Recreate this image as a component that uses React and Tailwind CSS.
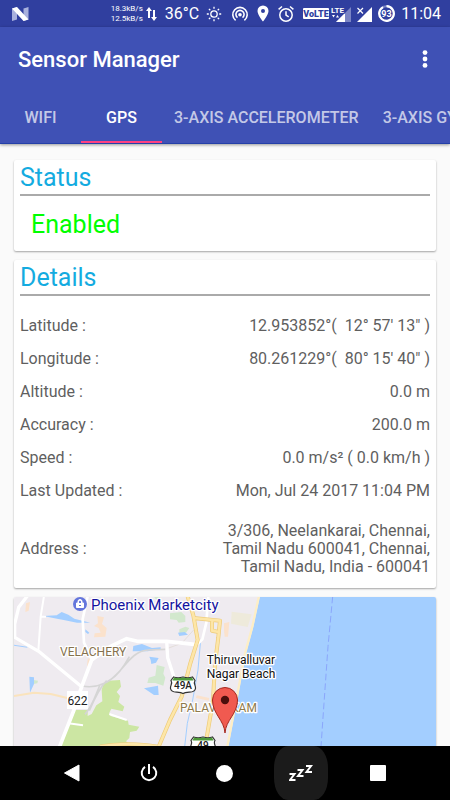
import React from "react";

const TABS = ["WIFI", "GPS", "3-AXIS ACCELEROMETER", "3-AXIS GYROSCOPE"];

const DETAILS = [
  { label: "Latitude :", value: "12.953852°(  12° 57' 13\" )" },
  { label: "Longitude :", value: "80.261229°(  80° 15' 40\" )" },
  { label: "Altitude :", value: "0.0 m" },
  { label: "Accuracy :", value: "200.0 m" },
  { label: "Speed :", value: "0.0 m/s² ( 0.0 km/h )" },
  { label: "Last Updated :", value: "Mon, Jul 24 2017 11:04 PM" },
];

const ADDRESS = [
  "3/306, Neelankarai, Chennai,",
  "Tamil Nadu 600041, Chennai,",
  "Tamil Nadu, India - 600041",
];

/**
 * Android status bar: network speed, temperature, indicators and clock
 */
const StatusBar = () => (
  <div className="flex h-[27px] shrink-0 items-center justify-between bg-[#303f9f] pl-3 pr-[9px] text-white">
    <svg width="17" height="14" viewBox="0 0 17 14" aria-hidden="true">
      <path d="M0 1.5L5 0v12.5L0 14z" fill="#a9b1dd" />
      <path d="M11.5 1.5L16.5 0v12.5L11.5 14z" fill="#a9b1dd" />
      <path d="M0 1.5L5 0l11.500 12.500-5 1.500z" fill="#fff" />
    </svg>
    <div className="flex items-center gap-[6px]">
      <div className="flex items-center gap-[3px]">
        <div className="text-right text-[8px] leading-[10px]">
          <div>18.3kB/s</div>
          <div>12.5kB/s</div>
        </div>
        <svg width="13" height="14" viewBox="0 0 13 14" fill="#fff" aria-hidden="true">
          <path d="M3 0l3 4H4v7H2V4H0z" />
          <path d="M8 14l-3-4h2V3h2v7h2z" />
        </svg>
      </div>
      <span className="text-[16px] leading-5">36°C</span>
      <svg width="18" height="16" viewBox="0 0 18 16" fill="none" stroke="#fff" strokeWidth="1.3" aria-hidden="true">
        <circle cx="9" cy="8" r="3.2" />
        <path d="M9 .8v2M9 13.2v2M1.8 8h2M14.2 8h2M3.9 2.9l1.4 1.4M12.7 11.7l1.4 1.4M3.9 13.1l1.4-1.4M12.7 4.3l1.4-1.4" />
      </svg>
      <svg width="22" height="16" viewBox="0 0 22 16" fill="none" stroke="#fff" strokeWidth="1.6" aria-hidden="true">
        <path d="M6.6 14.3a7.2 7.2 0 1 1 8.8 0" />
        <path d="M8.5 11.7a4.1 4.1 0 1 1 5 0" />
        <circle cx="11" cy="8.8" r="1.8" fill="#fff" stroke="none" />
      </svg>
      <svg width="12" height="17" viewBox="0 0 12 17" aria-hidden="true">
        <path
          fill="#fff"
          fillRule="evenodd"
          d="M6 .5A5.5 5.5 0 0 0 .5 6C.5 10 6 16.5 6 16.5S11.5 10 11.5 6A5.5 5.5 0 0 0 6 .5zM6 4a2 2 0 1 1 0 4 2 2 0 0 1 0-4z"
        />
      </svg>
      <svg width="22" height="18" viewBox="0 0 22 18" fill="none" stroke="#fff" strokeWidth="1.5" aria-hidden="true">
        <circle cx="11" cy="10" r="6.2" />
        <path d="M11 6.2v4l2.7 1.7M3.6 4.3L7 1.5M18.4 4.3L15 1.5" />
      </svg>
      <div className="flex items-center gap-[2px]">
        <svg width="26" height="11" viewBox="0 0 26 11" aria-hidden="true">
          <rect width="26" height="11" rx="1" fill="#fff" />
          <text x="13" y="9" textAnchor="middle" fontSize="9" fontWeight="900" fill="#303f9f">
            VoLTE
          </text>
        </svg>
        <svg width="20" height="18" viewBox="0 0 20 18" aria-hidden="true">
          <path d="M20 2v15H5z" fill="#7a84c4" />
          <path d="M14 8v9H5z" fill="#fff" />
          <text x="0" y="8" fontSize="8" fontWeight="700" fill="#fff" stroke="#303f9f" strokeWidth="1.5" paintOrder="stroke">
            LTE
          </text>
          <path d="M1 10l1.500 2.500L4 10zM5 12.500L6.500 10 8 12.500z" fill="#fff" />
        </svg>
      </div>
      <svg width="15" height="18" viewBox="0 0 15 18" aria-hidden="true">
        <path d="M15 2v15H0z" fill="#fff" />
        <path d="M0 3h7v6H0z" fill="#303f9f" />
        <path d="M.5 3L6 8.5M6 3L.5 8.5" stroke="#fff" strokeWidth="1.2" />
      </svg>
      <svg width="17" height="17" viewBox="0 0 17 17" aria-hidden="true">
        <circle cx="8.5" cy="8.5" r="7.3" fill="none" stroke="#7a84c4" strokeWidth="2" />
        <path d="M8.5 1.2a7.3 7.3 0 1 1-3.500.9" fill="none" stroke="#fff" strokeWidth="2.2" />
        <text x="8.5" y="11.7" textAnchor="middle" fontSize="9" fontWeight="700" fill="#fff">
          93
        </text>
      </svg>
      <span className="text-[16px] leading-5">11:04</span>
    </div>
  </div>
);

const AppBar = ({ active }) => (
  <header className="relative z-10 shrink-0 bg-[#3f51b5] text-white shadow-[0_1px_3px_rgba(0,0,0,0.4)]">
    <div className="flex h-[66px] items-center justify-between pl-[18px] pr-[13px]">
      <h1 className="text-[22px] font-medium leading-7">Sensor Manager</h1>
      <button type="button" aria-label="More options" className="flex w-6 justify-center">
        <svg width="6" height="20" viewBox="0 0 6 20" fill="#fff" aria-hidden="true">
          <circle cx="3" cy="2.6" r="2.400" />
          <circle cx="3" cy="9" r="2.400" />
          <circle cx="3" cy="15.4" r="2.400" />
        </svg>
      </button>
    </div>
    <nav className="flex overflow-hidden border-b border-[#2440a8]">
      {TABS.map((tab) => (
        <button
          key={tab}
          type="button"
          className={`h-[50px] min-w-[81px] shrink-0 border-b-2 px-3 pt-[2px] text-[16px] font-medium leading-5 ${
            tab === active
              ? "border-[#ff4081] text-white"
              : "border-transparent text-white/70"
          }`}
        >
          {tab}
        </button>
      ))}
    </nav>
  </header>
);

const Card = ({ title, children }) => (
  <section className="rounded-[2px] bg-white px-[6px] shadow-[0_1px_2px_rgba(0,0,0,0.35)]">
    <h2 className="border-b-2 border-[#aaaaaa] pt-[2px] text-[25px] leading-8 text-[#14abe0]">
      {title}
    </h2>
    {children}
  </section>
);

const RouteShield = ({ x, y, label }) => (
  <g transform={`translate(${x} ${y})`}>
    <path
      d="M2.5 1L0 4.500c2 3-1 5-.5 8 .5 3 3 3.500 6 3.700 3 .2 5 .3 6.500 1.300 1.500-1 3.500-1.100 6.500-1.300 3-.2 5.500-.7 6-3.700.5-3-2.500-5-.5-8L21.500 1c-3 1-6 1-9.500 0-3.500 1-6.500 1-9.500 0z"
      fill="#fff"
      stroke="#333"
      strokeWidth="1.2"
    />
    <path d="M3 1.500L1.500 4.500h21L21 1.500c-3 .8-6 .8-9 0-3 .8-6 .8-9 0z" fill="#4e9a3b" />
    <text x="12" y="13" textAnchor="middle" fontSize="10" fontWeight="500" fill="#222">
      {label}
    </text>
  </g>
);

const HIGHWAYS =
  "M562 16l18 60 13 74-22 70-26 100-35 70-34 80M580 84l80 8-5 50-10 80-6 110-24 140M636 92v30l20 4M300 470c50-10 120-10 172 0";

/**
 * Map preview with the current position pinned
 */
const LocationMap = () => (
  <svg
    className="h-full w-full"
    viewBox="0 0 422 149"
    preserveAspectRatio="xMidYMin slice"
    role="img"
    aria-label="Map of the current location"
  >
    <rect width="422" height="149" fill="#efebf0" />
    <g transform="translate(-14 -7) scale(.33333)" fill="none" strokeLinejoin="round">
      {/* parks */}
      <path
        fill="#cce6a3"
        d="M305 300l5-18 15-10 35-2 3 20-13 16 10 12-5 18 18 14-5 14-34-8-6 12 4 10 52 14 2 12 32 6-8 12-20 4-2 18-10 10 12 9 8 5H178l47-108h38v18l12-6 14-26 18-12z"
      />
      <path
        fill="#d2e8cd"
        d="M470 225l24 6-4 20 6 12-6 24-24-8-24 0 4-16 20-6zM510 70l34-4 12 12 0 18-20 2-6-8-20-2zM538 118l18-8 12 4-10 14-20 4zM460 18l18 0 6 10-14 2zM100 270l14 2-2 8-12 2z"
      />
      <path fill="#eeeadb" d="M695 65l60 8-12 38-50-10z" />
      {/* built-up areas */}
      <path
        fill="#fbe2cc"
        d="M292 78l20 4-6 20 14 12-4 26-34 2 2-12 18-2-6-14-14-6 12-8zM78 40l12-4-4 26-10 4zM263 206l8-2-2 26-8 0zM590 316l38 8-2 8-38-8zM672 100l16-4-4 44-10 0-2-18z"
      />
      {/* lakes */}
      <path
        fill="#a3ceff"
        d="M130 78l40-2 15-10 20 8 18 12 48 12-40 0-40-8-20-4zM256 118l12 10-4 4-8-6zM400 168l26-6 30 12 26-2 0 6-40 6-44 0zM448 200l28 4-8 14-14 4-2-12zM432 295l42-8 2 28-14 0zM88 260l14 2 0 20-12 26zM42 164l40 6 0 3-40-6zM534 128l20-2 10 8-26 4z"
      />
      <path d="M602 150l-8 90-16 90-16 70-8 70" stroke="#a3ceff" strokeWidth="3" />
      {/* railway yard */}
      <path
        d="M245 288c40 8 80-6 110-40s50-66 90-68l50-2M300 285c-10 20-20 60-45 88M320 272c-20 20-35 50-52 90M330 270c25-14 45-46 58-70"
        stroke="#d5d5d5"
        strokeWidth="5"
      />
      <path d="M495 178l50-18 36-40" stroke="#ded6ce" strokeWidth="2" />
      {/* minor roads */}
      <path d="M42 318l60-10 50 4 50 12" stroke="#fae3bd" strokeWidth="6" />
      <path d="M132 18l-10 62-7 103M122 80h16M328 372l52 18M205 400l44 6" stroke="#fff" strokeWidth="6" />
      <path d="M263 18l-15 70 4 70 23 50M625 18l-6 80-12 50-14 14" stroke="#fff" strokeWidth="8" />
      <path d="M82 18l-26 34-12 50 0 40 72 42 129 106M500 153l3 50 20 62" stroke="#fff" strokeWidth="10" />
      <path
        d="M178 472l44-112 23-70 30-80 55-40 50-24 32 8 88 0 90 10"
        stroke="#fff"
        strokeWidth="11"
      />
      {/* highways */}
      <path d={HIGHWAYS} stroke="#eecb78" strokeWidth="12" />
      <path d={HIGHWAYS} stroke="#fde6a8" strokeWidth="8" />
      {/* coast and sea */}
      <path fill="#a3ceff" d="M780 18L760 110 737 195 712 330 685 470H1310V18z" />
      <path d="M777 18L757 110 734 195 709 330 682 470" stroke="#fdeec6" strokeWidth="7" />
      <path d="M998 20l-14 150-12 170-9 130" stroke="#8ba6fb" strokeWidth="3" strokeDasharray="20 9" />
    </g>

    <circle cx="66" cy="7" r="7" fill="#6476dc" />
    <path d="M62.5 6h7v4.500h-7zM64 6V4.500a2 2 0 0 1 4 0V6" fill="#fff" stroke="#fff" strokeWidth="1" />
    <path d="M65 6V4.800a1 1 0 0 1 2 0V6zM65 8h2v1h-2z" fill="#6476dc" />

    <rect x="53" y="94" width="21" height="18" fill="#fff" />
    <text x="63.5" y="108" textAnchor="middle" fontSize="12" fill="#222">
      622
    </text>
    <RouteShield x={157} y={79} label="49A" />
    <RouteShield x={177} y={139} label="49" />

    <g stroke="#fff" strokeWidth="2.5" strokeLinejoin="round" paintOrder="stroke">
      <text x="77" y="13" fontSize="15" fill="#1414a0">
        Phoenix Marketcity
      </text>
      <text x="46" y="59" fontSize="12" fill="#85714d">
        VELACHERY
      </text>
      <text x="166" y="115" fontSize="12" fill="#8f7a4c">
        PALAVAKKAM
      </text>
      <g fontSize="12" fill="#111" textAnchor="middle">
        <text x="227" y="67">Thiruvalluvar</text>
        <text x="227" y="81">Nagar Beach</text>
      </g>
    </g>

    <path
      d="M211 136c-.8-13-12.500-19-12.500-33a12.500 12.500 0 0 1 25 0c0 14-11.700 20-12.500 33z"
      fill="#f05a50"
      stroke="#a5281f"
      strokeWidth="1"
    />
    <circle cx="211" cy="103" r="4.2" fill="#4a0f0c" />
  </svg>
);

const NavBar = () => (
  <nav className="grid h-[54px] shrink-0 grid-cols-5 bg-black px-[34px]">
    <button type="button" aria-label="Back" className="flex items-center justify-center">
      <svg width="18" height="18" viewBox="0 0 18 18" aria-hidden="true">
        <path d="M16 1v16L1.5 9z" fill="#fff" stroke="#fff" strokeWidth="1" strokeLinejoin="round" />
      </svg>
    </button>
    <button type="button" aria-label="Power" className="flex items-center justify-center">
      <svg width="18" height="18" viewBox="0 0 18 18" fill="none" stroke="#fff" strokeWidth="2" aria-hidden="true">
        <path d="M9 0v10M5 2.8a7.3 7.3 0 1 0 8 0" />
      </svg>
    </button>
    <button type="button" aria-label="Home" className="flex items-center justify-center">
      <span className="size-[17px] rounded-full bg-white" />
    </button>
    <button type="button" aria-label="Sleep" className="flex items-center justify-center">
      <span className="flex h-full w-[54px] items-center justify-center rounded-[14px/22px] bg-[#1b1b1b]">
        <svg width="24" height="18" viewBox="0 0 24 18" fill="none" stroke="#fff" strokeWidth="2" aria-hidden="true">
          <path d="M.5 10h5L1 16h5.500M8.500 6h5L9 12h5.500M17 2h5l-4.500 6H23" />
        </svg>
      </span>
    </button>
    <button type="button" aria-label="Recent apps" className="flex items-center justify-center">
      <span className="size-4 rounded-[1px] bg-white" />
    </button>
  </nav>
);

const App = () => {
  return (
    <div className="flex h-screen flex-col overflow-hidden bg-[#fafafa] font-['Roboto',sans-serif]">
      <StatusBar />
      <AppBar active="GPS" />
      <main className="flex min-h-0 flex-1 flex-col gap-[9px] overflow-hidden px-[14px] pt-4">
        <Card title="Status">
          <p className="pb-[11px] pl-[11px] pt-[14px] text-[25px] leading-[30px] text-[#00ff00]">
            Enabled
          </p>
        </Card>
        <Card title="Details">
          <dl className="pb-3 pt-[13px] text-[16px] leading-[18px] text-[#5f5f5f]">
            {DETAILS.map(({ label, value }) => (
              <div key={label} className="flex h-[33px] items-center justify-between">
                <dt>{label}</dt>
                <dd className="whitespace-pre">{value}</dd>
              </div>
            ))}
            <div className="flex items-center justify-between pt-[15px]">
              <dt>Address :</dt>
              <dd className="text-right">
                {ADDRESS.map((line) => (
                  <div key={line}>{line}</div>
                ))}
              </dd>
            </div>
          </dl>
        </Card>
        <section className="min-h-0 flex-1 overflow-hidden rounded-t-[2px] shadow-[0_1px_2px_rgba(0,0,0,0.35)]">
          <LocationMap />
        </section>
      </main>
      <NavBar />
    </div>
  );
};

export default App;
